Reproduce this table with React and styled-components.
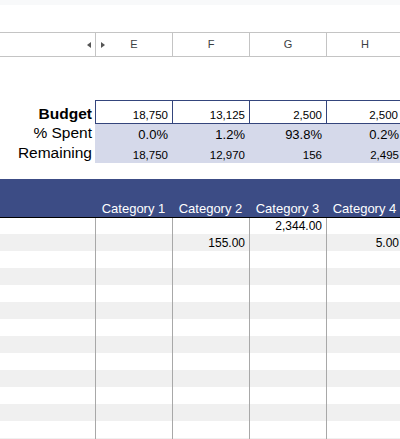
import React from 'react';
import styled, { createGlobalStyle } from 'styled-components';

const GlobalStyle = createGlobalStyle`
  html, body {
    margin: 0;
    padding: 0;
    overflow: hidden;
    background: #ffffff;
  }
  body {
    width: 400px;
    height: 439px;
    font-family: "Liberation Sans", Arial, sans-serif;
  }
`;

const columns = ['E', 'F', 'G', 'H'];

const summary = [
  { label: 'Budget', bold: true, boxed: true, size: 11.5, values: ['18,750', '13,125', '2,500', '2,500'] },
  { label: '% Spent', shaded: true, size: 13, values: ['0.0%', '1.2%', '93.8%', '0.2%'] },
  { label: 'Remaining', shaded: true, size: 11.5, values: ['18,750', '12,970', '156', '2,495'] },
];

const rows = [
  { G: '2,344.00' },
  { F: '155.00', H: '5.00' },
  {}, {}, {}, {}, {}, {}, {}, {}, {}, {}, {}, {},
];

const App = () => {
  return (
    <>
      <GlobalStyle />
      <Sheet>
        <TopStrip />
        <ColumnHeader>
          <HeaderCell $align="end">
            <ArrowLeft />
          </HeaderCell>
          {columns.map((c, i) => (
            <LetterCell key={c}>
              <span>{i === 0 && <ArrowRight />}</span>
              <Letter>{c}</Letter>
              <span />
            </LetterCell>
          ))}
        </ColumnHeader>

        <Summary>
          {summary.map((r) => (
            <React.Fragment key={r.label}>
              <Label $bold={r.bold}>{r.label}</Label>
              {r.values.map((v, i) => (
                <Value
                  key={i}
                  $boxed={r.boxed}
                  $shaded={r.shaded}
                  $size={r.size}
                  $last={i === r.values.length - 1}
                >
                  {v}
                </Value>
              ))}
            </React.Fragment>
          ))}
        </Summary>

        <Band>
          <span />
          {[1, 2, 3, 4].map((n) => (
            <Category key={n}>Category {n}</Category>
          ))}
        </Band>

        <Data>
          {rows.map((r, i) => (
            <Row key={i} $alt={i % 2 === 1} $first={i === 0}>
              <span />
              {columns.map((c) => (
                <Cell key={c}>{r[c]}</Cell>
              ))}
            </Row>
          ))}
        </Data>
      </Sheet>
    </>
  );
};

const Sheet = styled.div`
  display: flex;
  flex-direction: column;
  width: 403px;
`;

const TopStrip = styled.div`
  height: 5px;
  background: #f8f9fa;
  margin-bottom: 27px;
`;

const ColumnHeader = styled.div`
  display: grid;
  grid-template-columns: 96px repeat(4, 77px);
  height: 25px;
  box-sizing: border-box;
  border-top: 1px solid #c4c4c4;
  border-bottom: 1px solid #c4c4c4;
`;

const HeaderCell = styled.div`
  display: flex;
  align-items: center;
  justify-content: flex-${(p) => p.$align};
  padding-right: 4px;
  box-sizing: border-box;
  border-right: 1px solid #c4c4c4;
`;

const LetterCell = styled.div`
  display: grid;
  grid-template-columns: 1fr auto 1fr;
  align-items: center;
  padding-left: 5px;
  padding-right: 5px;
  box-sizing: border-box;
  border-right: 1px solid #c4c4c4;

  & > span {
    display: flex;
    align-items: center;
  }
`;

const Letter = styled.div`
  font-size: 11px;
  color: #3c4043;
  line-height: 1;
`;

const ArrowLeft = styled.i`
  width: 0;
  height: 0;
  border-top: 3.5px solid transparent;
  border-bottom: 3.5px solid transparent;
  border-right: 4px solid #555555;
`;

const ArrowRight = styled.i`
  width: 0;
  height: 0;
  border-top: 3.5px solid transparent;
  border-bottom: 3.5px solid transparent;
  border-left: 4px solid #555555;
`;

const Summary = styled.div`
  display: grid;
  grid-template-columns: 95px repeat(4, 77px);
  grid-template-rows: 24px 19px 20px;
  margin-top: 43px;
`;

const Label = styled.div`
  display: flex;
  align-items: flex-end;
  justify-content: flex-end;
  padding: 0 3px 3px 0;
  font-size: 15.5px;
  line-height: 1;
  font-weight: ${(p) => (p.$bold ? 700 : 400)};
  color: #000000;
`;

const Value = styled.div`
  display: flex;
  align-items: flex-end;
  justify-content: flex-end;
  box-sizing: border-box;
  padding: 0 4px 2px 0;
  font-size: ${(p) => p.$size}px;
  line-height: 1;
  color: #000000;
  background: ${(p) => (p.$shaded ? '#d5d9ea' : '#ffffff')};
  border: ${(p) => (p.$boxed ? '1px solid #34457c' : 'none')};
  border-right: ${(p) => (p.$boxed && p.$last ? '1px solid #34457c' : 'none')};
`;

const Band = styled.div`
  display: grid;
  grid-template-columns: 95px repeat(4, 77px);
  height: 39px;
  box-sizing: border-box;
  margin-top: 16px;
  background: #3c4c85;
  border-bottom: 1px solid #000000;
`;

const Category = styled.div`
  display: flex;
  align-items: flex-end;
  justify-content: center;
  padding-bottom: 2px;
  font-size: 13px;
  line-height: 1;
  color: #ffffff;
  white-space: nowrap;
`;

const Data = styled.div`
  display: flex;
  flex-direction: column;
`;

const Row = styled.div`
  display: grid;
  grid-template-columns: 95px repeat(4, 77px);
  height: ${(p) => (p.$first ? 16 : 17)}px;
  background: ${(p) => (p.$alt ? '#f0f0f0' : '#ffffff')};
`;

const Cell = styled.div`
  display: flex;
  align-items: flex-end;
  justify-content: flex-end;
  box-sizing: border-box;
  padding: 0 4px 2px 0;
  border-left: 1px solid #a8a8a8;
  font-size: 12px;
  line-height: 1;
  color: #000000;
`;

export default App;
